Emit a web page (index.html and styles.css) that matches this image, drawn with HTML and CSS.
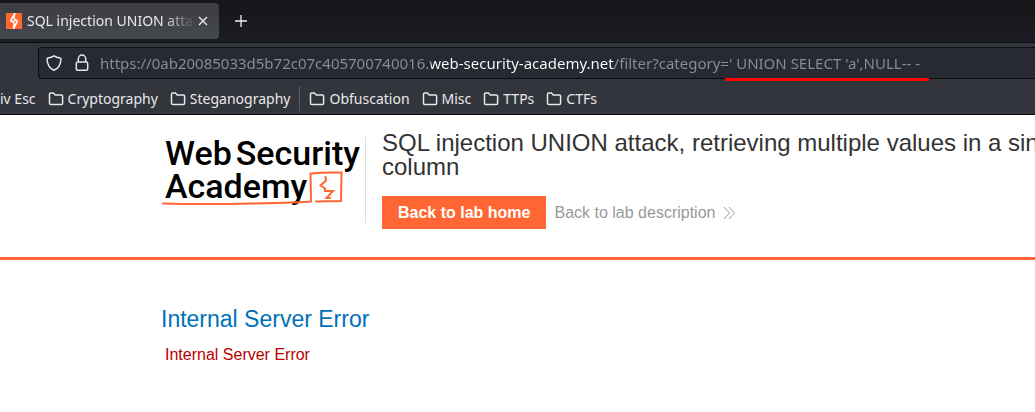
FILE: index.html
```html
<!DOCTYPE html>
<html lang="en">
<head>
<meta charset="utf-8">
<title>SQL injection UNION attack</title>
<link rel="stylesheet" href="styles.css">
</head>
<body>
<svg class="defs" aria-hidden="true">
  <symbol id="folder" viewBox="0 0 16 16"><path d="M1.5 12.2V3.3Q1.5 2 2.8 2H5.5L7.2 3.9H13.4Q14.6 3.9 14.6 5.1V12.2Q14.6 13.5 13.4 13.5H2.8Q1.5 13.5 1.5 12.2Z"/></symbol>
</svg>
<div class="tabs">
  <div class="tab">
    <svg class="favicon" viewBox="0 0 16 16"><rect width="16" height="16" fill="#ff6633"/><path d="M8 0H9.600L8.600 5.500L12.500 7.700L8.300 16H6.600L7.600 10.300L3.600 8.100Z" fill="#fff"/><path d="M7.200 5L5.700 7.300L8.600 8ZM8.200 7.800L10.600 8.600L8.700 11Z" fill="#ff6633"/></svg>
    <span class="tab-title">SQL injection UNION attack</span>
    <button class="icon-btn close" aria-label="Close tab"><svg width="10" height="10" viewBox="0 0 10 10"><path d="M1 1L9 9M9 1L1 9"/></svg></button>
  </div>
  <button class="icon-btn" aria-label="New tab"><svg width="14" height="14" viewBox="0 0 14 14"><path d="M7 1V13M1 7H13"/></svg></button>
</div>
<div class="toolbar">
  <div class="urlbar">
    <svg class="line-icon" width="16" height="16" viewBox="0 0 16 16"><path d="M8 .8Q10.5 2.5 14 3Q15 3.3 14.9 4.5Q14.5 12.5 8 15.3Q1.5 12.5 1.1 4.5Q1 3.3 2 3Q5.5 2.5 8 .8Z"/></svg>
    <svg class="line-icon" width="14" height="18" viewBox="0 0 14 18"><path d="M3.3 8V4.8A3.7 3.7 0 0 1 10.7 4.8V8M3 8H11Q12.7 8 12.7 9.7V14.8Q12.7 16.3 11 16.3H3Q1.3 16.3 1.3 14.8V9.7Q1.3 8 3 8Z"/></svg>
    <input class="url" type="text" aria-label="Address" value="https://0ab20085033d5b72c07c405700740016.web-security-academy.net/filter?category=' UNION SELECT 'a',NULL-- -">
    <span class="marker"></span>
  </div>
</div>
<nav class="bookmarks">
  <a href="#">iv Esc</a>
  <a href="#"><svg><use href="#folder"/></svg>Cryptography</a>
  <a href="#"><svg><use href="#folder"/></svg>Steganography</a>
  <span class="separator"></span>
  <a href="#"><svg><use href="#folder"/></svg>Obfuscation</a>
  <a href="#"><svg><use href="#folder"/></svg>Misc</a>
  <a href="#"><svg><use href="#folder"/></svg>TTPs</a>
  <a href="#"><svg><use href="#folder"/></svg>CTFs</a>
</nav>
<header class="lab-header">
  <div class="logo">
    <div class="logo-line"><span>Web</span><span>Security</span></div>
    <div class="logo-line">Academy</div>
    <svg class="logo-mark" viewBox="0 0 184 40" width="184" height="40"><path d="M1 34.500Q40 35.500 90 34.500T149 32.500L148.500 4.500Q163 3 179.500 3.500L179 32L154 32.500" stroke-width="2"/><path d="M163.500 8L164 11.500L158.500 16.500L163 19.500V22H171L164.500 29H168" stroke-width="2"/></svg>
  </div>
  <div class="lab-title">
    <h2>SQL injection UNION attack, retrieving multiple values in a single column</h2>
    <div class="actions">
      <a class="home" href="#">Back to lab home</a>
      <a class="description" href="#">Back to lab description <svg width="13" height="14" viewBox="0 0 13 14"><path d="M1 1L6.500 7L1 13M6 1L11.500 7L6 13"/></svg></a>
    </div>
  </div>
</header>
<main>
  <h4>Internal Server Error</h4>
  <p>Internal Server Error</p>
</main>
</body>
</html>
```
FILE: styles.css
```css
* { box-sizing: border-box; }
body {
  margin: 0;
  overflow: hidden;
  background: #fff;
  font-family: "Liberation Sans", Arial, sans-serif;
}
.defs { display: none; }
a { text-decoration: none; }
svg { flex: none; fill: none; }

.tabs, .toolbar, .bookmarks {
  display: flex;
  align-items: center;
  color: #e8e8ea;
  font-family: "Noto Sans", sans-serif;
  font-size: 14px;
  line-height: 20px;
}
.tabs {
  height: 43px;
  gap: 15px;
  background: linear-gradient(#15161a, #1c1d22);
  border-bottom: 1px solid #0c0d10;
}
.tab {
  display: flex;
  align-items: center;
  width: 219px;
  height: 36px;
  padding: 0 8px 0 6px;
  background: linear-gradient(#3c3d42, #464850);
  border-radius: 0 4px 4px 0;
}
.favicon { width: 16px; height: 16px; margin-right: 5px; }
.tab-title {
  flex: 1;
  overflow: hidden;
  white-space: nowrap;
  mask-image: linear-gradient(to right, #000 calc(100% - 32px), transparent);
}
.icon-btn {
  display: flex;
  padding: 0;
  border: 0;
  background: none;
}
.close { padding: 3px; }
.icon-btn path { stroke: #eee; stroke-width: 1.3; }

.toolbar {
  height: 37px;
  padding: 4px 0 1px 38px;
  background: #33353d;
}
.urlbar {
  position: relative;
  display: flex;
  flex: 1;
  align-items: center;
  gap: 13px;
  height: 32px;
  padding-left: 7px;
  background: #272933;
  border: 1px solid #0c0d10;
  border-right: 0;
  border-radius: 4px 0 0 4px;
}
.line-icon, .bookmarks svg { stroke: #e8e8ea; stroke-width: 1.5; }
.url {
  flex: 1;
  min-width: 0;
  margin-left: -2px;
  padding: 0;
  border: 0;
  color: #8d8e94;
  font: inherit;
  font-size: 15px;
  background: linear-gradient(to right, #8d8e94 331px, #fff 331px 514px, #8d8e94 514px);
  background-clip: text;
  -webkit-text-fill-color: transparent;
}
.marker {
  position: absolute;
  left: 686px;
  bottom: -3px;
  width: 204px;
  height: 3px;
  background: #f00;
}

.bookmarks {
  height: 35px;
  gap: 12px;
  padding-top: 3px;
  background: #33353d;
  border-bottom: 1px solid #0c0d10;
}
.bookmarks a {
  display: flex;
  align-items: center;
  gap: 4px;
  color: inherit;
}
.bookmarks svg { width: 16px; height: 16px; }
.separator { width: 1px; height: 25px; margin: 0 -3px; background: #5a5c64; }

.lab-header {
  display: flex;
  padding: 16px 0 28px 162px;
  border-bottom: 3px solid #ff6633;
}
.logo {
  position: relative;
  flex: none;
  width: 204px;
  height: 92px;
  padding: 6px 0 0 3px;
  color: #000;
  font-family: Roboto, sans-serif;
  font-size: 34px;
  font-weight: 500;
  line-height: 33px;
  background: linear-gradient(#ddd, #ddd) right 6px / 1px 86px no-repeat;
}
.logo-line { display: flex; gap: 4px; }
.logo-mark { position: absolute; left: 0; top: 38px; }
.logo-mark path { stroke: #ff6633; stroke-linecap: round; }
.lab-title { flex: none; width: 700px; margin-left: 16px; }
h2 {
  margin: 0;
  color: #333;
  font-size: 24px;
  font-weight: 400;
  line-height: 24px;
}
.actions { display: flex; align-items: center; gap: 8px; margin-top: 17px; font-size: 16px; }
.home {
  padding: 0 16px;
  color: #fff;
  font-weight: 700;
  line-height: 33px;
  background: #ff6633;
}
.description { display: flex; align-items: center; gap: 8px; color: #999; }
.description path { stroke: #999; }

main { padding: 45px 0 0 161px; }
h4 { margin: 0; color: #0071ba; font-size: 23px; font-weight: 400; line-height: 28px; }
p { margin: 12px 0 0; padding-left: 4px; color: #b80000; font-size: 16px; line-height: 20px; }
```
